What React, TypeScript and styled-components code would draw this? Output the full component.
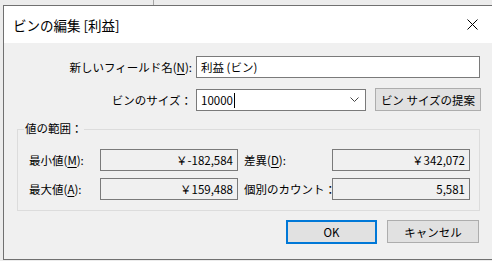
import React from 'react';
import styled, {createGlobalStyle} from 'styled-components';

const GlobalStyle = createGlobalStyle`
  html, body {
    margin: 0;
    padding: 0;
    width: 492px;
    height: 261px;
    overflow: hidden;
  }
  body {
    background: linear-gradient(to right, transparent 153px, #a6a6a6 153px, #a6a6a6 154px, transparent 154px) no-repeat 0 0 / 100% 5px, #ececec;
    font-family: "Noto Sans CJK JP", "Noto Sans", sans-serif;
    font-size: 11.5px;
    color: #000;
  }
`

const Window = styled.div`
  box-sizing: border-box;
  margin: 5px 0 0 3px;
  width: 489px;
  height: 255px;
  border: 1px solid #707070;
  border-right: none;
  background: #f0f0f0;
  display: flex;
  flex-direction: column;
`

const TitleBar = styled.div`
  height: 37px;
  background: #fff;
  display: flex;
  align-items: center;
  justify-content: space-between;
  padding: 0 14px 0 9px;
`

const Title = styled.div`
  font-size: 13.5px;
`

const Content = styled.div`
  padding: 13px 12px 0 0;
  display: flex;
  flex-direction: column;
`

const FieldRow = styled.div<{$cols: string; $mb?: number}>`
  display: grid;
  grid-template-columns: 188px ${({$cols}) => $cols};
  column-gap: 4px;
  align-items: center;
  margin-bottom: ${({$mb}) => $mb ?? 0}px;
`

const Label = styled.div<{$align?: string}>`
  text-align: ${({$align}) => $align ?? 'right'};
  white-space: nowrap;
  u { text-decoration: underline; text-underline-offset: 2px; }
`

const TextBox = styled.div<{$w?: number}>`
  box-sizing: border-box;
  height: 22px;
  width: ${({$w}) => ($w ? `${$w}px` : 'auto')};
  border: 1px solid #7a7a7a;
  background: #fff;
  padding: 0 4px;
  display: flex;
  align-items: center;
  white-space: nowrap;
`

const Caret = styled.span`
  display: inline-block;
  width: 1px;
  height: 15px;
  background: #000;
  margin-left: 1px;
  vertical-align: -3px;
`

const ComboRow = styled.div`
  display: flex;
  align-items: center;
  gap: 9px;
`

const Combo = styled(TextBox)`
  justify-content: space-between;
  padding-right: 6px;
`

const Button = styled.div<{$w: number; $default?: boolean}>`
  box-sizing: border-box;
  width: ${({$w}) => $w}px;
  height: ${({$default}) => ($default ? 24 : 23)}px;
  background: #e1e1e1;
  border: ${({$default}) => ($default ? '2px solid #0078d7' : '1px solid #adadad')};
  display: flex;
  align-items: center;
  justify-content: center;
  white-space: nowrap;
`

const Group = styled.div`
  position: relative;
  margin: 18px 0 0 13px;
  border: 1px solid #dcdcdc;
  padding: 19px 10px 10px 11px;
  display: grid;
  grid-template-columns: 71px 138px 6px 88px 138px;
  row-gap: 7px;
  align-items: center;
`

const GroupLegend = styled.div`
  position: absolute;
  left: 6px;
  top: -10px;
  padding: 0 1px;
  background: #f0f0f0;
`

const ValueBox = styled.div`
  box-sizing: border-box;
  height: 22px;
  border: 1px solid #7a7a7a;
  background: #f0f0f0;
  padding: 0 4px;
  display: flex;
  align-items: center;
  justify-content: flex-end;
  white-space: nowrap;
`

const ButtonBar = styled.div`
  display: flex;
  justify-content: flex-end;
  gap: 10px;
  margin: 9px 1px 0 0;
`

const CloseIcon = () => (
    <svg width="11" height="11" viewBox="0 0 11 11">
        <path d="M0.5 0.5 L10.5 10.5 M10.5 0.5 L0.5 10.5" stroke="#000" strokeWidth="1" fill="none"/>
    </svg>
)

const Chevron = () => (
    <svg width="9" height="5" viewBox="0 0 9 5">
        <path d="M0.5 0.5 L4.5 4.5 L8.5 0.5" stroke="#444" strokeWidth="1" fill="none"/>
    </svg>
)

const stats = [
    {label: <>最小値(<u>M</u>):</>, value: '￥-182,584', label2: <>差異(<u>D</u>):</>, value2: '￥342,072'},
    {label: <>最大値(<u>A</u>):</>, value: '￥159,488', label2: '個別のカウント：', value2: '5,581'},
]

export default function App() {
    return (
        <>
            <GlobalStyle/>
            <Window>
                <TitleBar>
                    <Title>ビンの編集 [利益]</Title>
                    <CloseIcon/>
                </TitleBar>
                <Content>
                    <FieldRow $cols="1fr" $mb={10}>
                        <Label>新しいフィールド名(<u>N</u>):</Label>
                        <TextBox>利益 (ビン)</TextBox>
                    </FieldRow>
                    <FieldRow $cols="1fr">
                        <Label>ビンのサイズ：</Label>
                        <ComboRow>
                            <Combo $w={170}>
                                <span>10000<Caret/></span>
                                <Chevron/>
                            </Combo>
                            <Button $w={106}>ビン サイズの提案</Button>
                        </ComboRow>
                    </FieldRow>
                    <Group>
                        <GroupLegend>値の範囲：</GroupLegend>
                        {stats.map((s, i) => (
                            <React.Fragment key={i}>
                                <Label $align="left">{s.label}</Label>
                                <ValueBox>{s.value}</ValueBox>
                                <span/>
                                <Label $align="left">{s.label2}</Label>
                                <ValueBox>{s.value2}</ValueBox>
                            </React.Fragment>
                        ))}
                    </Group>
                    <ButtonBar>
                        <Button $w={91} $default>OK</Button>
                        <Button $w={92}>キャンセル</Button>
                    </ButtonBar>
                </Content>
            </Window>
        </>
    );
}
